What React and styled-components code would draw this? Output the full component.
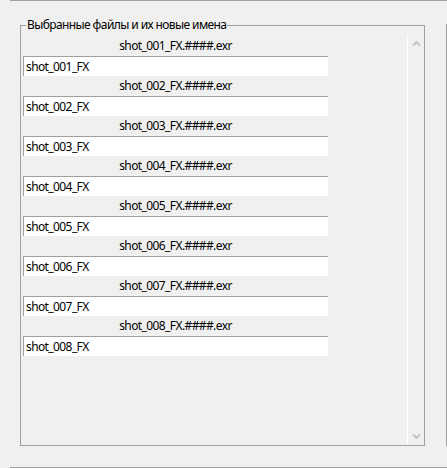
import React from 'react';
import styled, { createGlobalStyle } from 'styled-components';

const GlobalStyle = createGlobalStyle`
  html, body {
    margin: 0;
    padding: 0;
    background: #f0f0f0;
  }
  body {
    font-family: "Noto Sans", "Liberation Sans", sans-serif;
    font-size: 12px;
    letter-spacing: -0.6px;
    color: #000;
  }
`;

const Frame = styled.div`
  box-sizing: border-box;
  margin-left: 10px;
  width: 437px;
  height: 468px;
  border-top: 1px solid #a0a0a0;
  border-bottom: 1px solid #a0a0a0;
  padding: 24px 0 21px 10px;
  display: flex;
`;

const GroupBox = styled.div`
  position: relative;
  box-sizing: border-box;
  width: 405px;
  border: 1px solid #a0a0a0;
  display: flex;
`;

const Legend = styled.span`
  position: absolute;
  top: -9px;
  left: 5px;
  padding: 0 1px;
  background: #f0f0f0;
  line-height: 16px;
  white-space: nowrap;
`;

const Spacer = styled.div`
  flex: 1;
`;

const SidePanel = styled.div`
  width: 0;
  margin-top: -1px;
  border-left: 1px solid #a0a0a0;
`;

const List = styled.div`
  flex: 1;
  padding: 10px 0 0 2px;
  display: flex;
  flex-direction: column;
`;

const Entry = styled.div`
  width: 305px;
  display: flex;
  flex-direction: column;
`;

const FileName = styled.div`
  height: 20px;
  line-height: 20px;
  text-align: center;
  white-space: nowrap;
`;

const NameInput = styled.input`
  box-sizing: border-box;
  width: 305px;
  height: 20px;
  margin: 0;
  padding: 0 2px;
  border: none;
  border-top: 1px solid #a0a0a0;
  border-left: 1px solid #a0a0a0;
  background: #fff;
  font: inherit;
  letter-spacing: inherit;
  color: #000;
  outline: none;
`;

const ScrollBar = styled.div`
  box-sizing: border-box;
  width: 17px;
  margin-top: 8px;
  border-left: 1px solid #fff;
  display: flex;
  flex-direction: column;
  justify-content: space-between;
  align-items: center;
  padding: 6px 0 5px;
`;

function Chevron({ up }) {
  return (
    <svg width={9} height={7} viewBox="0 0 9 7">
      <polyline
        points={up ? '1,5.5 4.5,2 8,5.5' : '1,1.5 4.5,5 8,1.5'}
        fill="none"
        stroke="#c2c2c2"
        strokeWidth={2}
      />
    </svg>
  );
}

const files = ['001', '002', '003', '004', '005', '006', '007', '008'];

export default function App() {
  return (
    <>
      <GlobalStyle />
      <Frame>
        <GroupBox>
          <Legend>Выбранные файлы и их новые имена</Legend>
          <List>
            {files.map((n) => (
              <Entry key={n}>
                <FileName>{`shot_${n}_FX.####.exr`}</FileName>
                <NameInput defaultValue={`shot_${n}_FX`} />
              </Entry>
            ))}
          </List>
          <ScrollBar>
            <Chevron up />
            <Chevron />
          </ScrollBar>
        </GroupBox>
        <Spacer />
        <SidePanel />
      </Frame>
    </>
  );
}
